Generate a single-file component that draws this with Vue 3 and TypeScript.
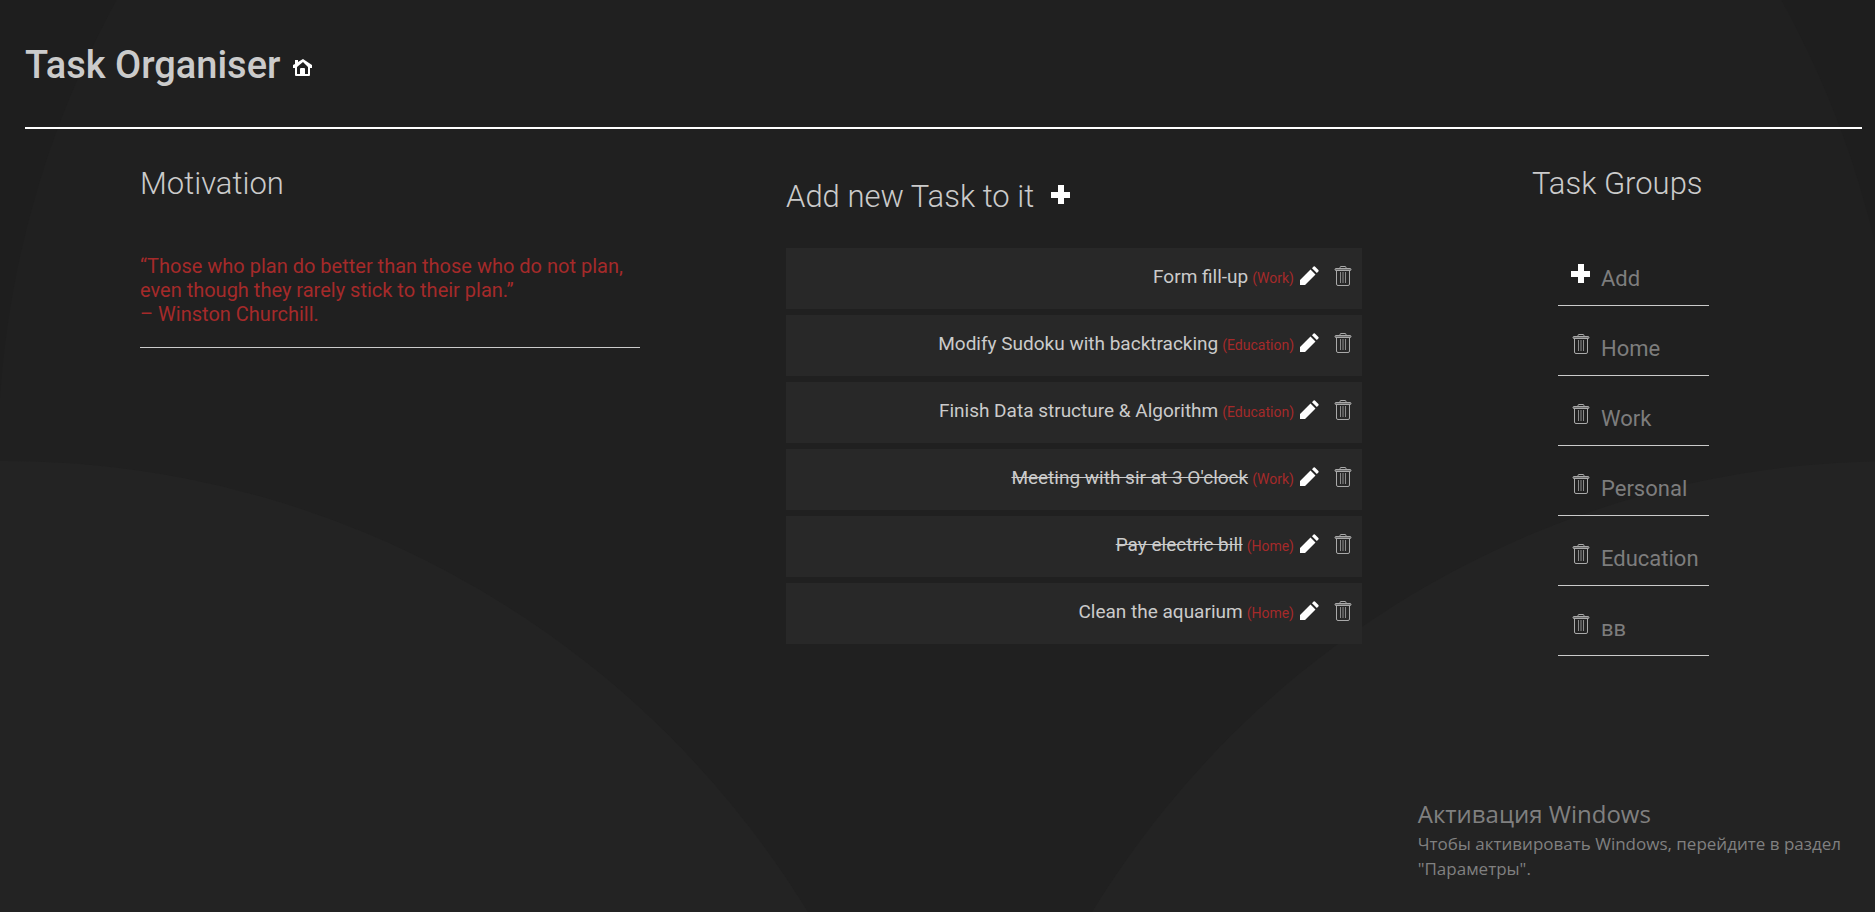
<script setup lang="ts">
interface Task {
  title: string
  group: string
  done: boolean
}

const tasks: Task[] = [
  { title: 'Form fill-up', group: 'Work', done: false },
  { title: 'Modify Sudoku with backtracking', group: 'Education', done: false },
  { title: 'Finish Data structure & Algorithm', group: 'Education', done: false },
  { title: "Meeting with sir at 3 O'clock", group: 'Work', done: true },
  { title: 'Pay electric bill', group: 'Home', done: true },
  { title: 'Clean the aquarium', group: 'Home', done: false },
]

const groups: string[] = ['Home', 'Work', 'Personal', 'Education', 'вв']
</script>

<template>
  <div class="page">
    <svg class="backdrop" viewBox="0 0 1875 912" preserveAspectRatio="xMidYMid slice" aria-hidden="true">
      <circle cx="949" cy="460" r="951" fill="#202020" />
      <circle cx="5" cy="1401" r="940" fill="#232323" />
      <circle cx="1895" cy="1401" r="940" fill="#232323" />
    </svg>
    <svg class="sprite" aria-hidden="true">
      <symbol id="trash" viewBox="0 0 20 20">
        <g fill="none" stroke="#a9a9a9">
          <path d="M7 2.5V1.5Q7 .5 8 .5h4Q13 .5 13 1.5V2.5" />
          <rect x="2" y="2.5" width="16" height="2" rx="1" fill="#6c6c6c" />
          <path d="M3.5 5V18Q3.500 19.500 5 19.500H15Q16.500 19.500 16.500 18V5" />
          <path d="M7.500 6V17M10 6V17M12.500 6V17" stroke="#8c8c8c" />
        </g>
      </symbol>
      <symbol id="pencil" viewBox="0 0 20 20">
        <path fill="#fff" d="M0 19V14L10.500 3.500 15.500 8.500 5 19ZM12 2.200 13.600.6Q14.200 0 14.900.6L18.400 4.100Q19 4.800 18.400 5.400L16.800 7Z" />
      </symbol>
      <symbol id="plus" viewBox="0 0 20 20">
        <path fill="#fff" d="M7 0h6v7h6v6h-6v6H7v-6H0V7h7z" />
      </symbol>
      <symbol id="house" viewBox="0 0 20 18">
        <path fill="#fff" fill-rule="evenodd" d="M2 1h3v2L10 0l9 6v3h-2v7q0 1-1 1H3q-1 0-1-1V9H0V6l2-1zM4 8v7h3v-5q0-1 1-1h3q1 0 1 1v5h3V8L10 3z" />
      </symbol>
    </svg>

    <header class="header">
      <h1>Task Organiser</h1>
      <a href="#" class="icon-link" aria-label="Home page"><svg class="house"><use href="#house" /></svg></a>
    </header>

    <main class="columns">
      <section class="motivation">
        <h2>Motivation</h2>
        <blockquote>
          “Those who plan do better than those who do not plan,<br />even though they rarely stick to their plan.”<br />– Winston Churchill.
        </blockquote>
      </section>

      <section class="tasks">
        <div class="add-task">
          <h2>Add new Task to it</h2>
          <button type="button" aria-label="Add task"><svg class="icon"><use href="#plus" /></svg></button>
        </div>
        <ul class="task-list">
          <li v-for="task in tasks" :key="task.title">
            <p class="label">
              <span :class="{ done: task.done }">{{ task.title }}</span>
              <small>({{ task.group }})</small>
            </p>
            <button type="button" :aria-label="`Edit ${task.title}`"><svg class="icon"><use href="#pencil" /></svg></button>
            <button type="button" class="remove" :aria-label="`Delete ${task.title}`"><svg class="icon"><use href="#trash" /></svg></button>
          </li>
        </ul>
      </section>

      <section class="groups">
        <h2>Task Groups</h2>
        <ul class="group-list">
          <li>
            <button type="button" aria-label="Add group"><svg class="icon"><use href="#plus" /></svg></button>
            <a href="#">Add</a>
          </li>
          <li v-for="group in groups" :key="group">
            <button type="button" :aria-label="`Delete ${group}`"><svg class="icon"><use href="#trash" /></svg></button>
            <a href="#">{{ group }}</a>
          </li>
        </ul>
      </section>
    </main>

    <aside class="activation">
      <strong>Активация Windows</strong>
      <p>Чтобы активировать Windows, перейдите в раздел<br />"Параметры".</p>
    </aside>
  </div>
</template>

<style>
body {
  background: #1e1e1e;
}
</style>

<style scoped>
.page {
  position: relative;
  box-sizing: border-box;
  min-height: 100vh;
  padding: 40px 13px 0 25px;
  overflow: hidden;
  background: #1e1e1e;
  color: #cbcbcb;
  font-family: Bahnschrift, Roboto, sans-serif;
}
.backdrop {
  position: absolute;
  inset: 0;
  width: 100%;
  height: 100%;
}
.sprite {
  position: absolute;
  width: 0;
  height: 0;
}
.header {
  position: relative;
  display: flex;
  gap: 13px;
  height: 87px;
  border-bottom: 2px solid #fff;
}
h1 {
  margin: 0;
  font-size: 38px;
  line-height: 50px;
  font-weight: 500;
}
h2 {
  margin: 0;
  font-size: 31px;
  line-height: 40px;
  font-weight: 300;
}
.icon-link {
  padding-top: 19px;
}
.house {
  display: block;
  width: 20px;
  height: 18px;
}
.icon {
  display: block;
  width: 20px;
  height: 20px;
}
button {
  padding: 0;
  border: 0;
  background: none;
  cursor: pointer;
}
.columns {
  position: relative;
  display: grid;
  grid-template-columns: minmax(0, 500fr) minmax(0, 576fr) minmax(0, 213fr);
  column-gap: 146px;
  padding: 35px 141px 0 115px;
}
blockquote {
  margin: 50px 0 0;
  padding-bottom: 21px;
  border-bottom: 1px solid #cbcbcb;
  color: #a52a2a;
  font-size: 20px;
  line-height: 24px;
}
ul {
  margin: 0;
  padding: 0;
  list-style: none;
}
.add-task {
  display: flex;
  align-items: center;
  gap: 17px;
  padding-top: 13px;
}
.add-task button {
  margin-bottom: 4px;
}
.task-list {
  display: grid;
  gap: 6px;
  margin-top: 31px;
}
.task-list li {
  display: flex;
  justify-content: flex-end;
  height: 61px;
  padding-right: 9px;
  background: #282828;
}
.task-list button {
  align-self: flex-start;
  margin: 18px 0 0 6px;
}
.task-list .remove {
  margin-left: 13px;
}
.label {
  margin: 0;
  font-size: 19px;
  line-height: 58px;
}
.label small {
  margin-left: 4px;
  color: #a52a2a;
  font-size: 14px;
}
.done {
  text-decoration: line-through;
}
.groups {
  padding-left: 24px;
}
.group-list {
  width: 151px;
  margin: 32px 0 0 26px;
}
.group-list li {
  display: flex;
  gap: 10px;
  box-sizing: border-box;
  height: 70px;
  padding: 28px 0 0 13px;
  border-bottom: 1px solid #cbcbcb;
}
.group-list button {
  align-self: flex-start;
}
.group-list a {
  color: #7d7d7d;
  font-size: 22px;
  line-height: 30px;
  text-decoration: none;
}
.activation {
  position: absolute;
  right: 34px;
  bottom: 31px;
  color: #808080;
  font-family: "Segoe UI", "Open Sans", "Noto Sans", sans-serif;
}
.activation strong {
  display: block;
  font-size: 24px;
  line-height: 34px;
  font-weight: 400;
}
.activation p {
  margin: 0;
  font-size: 17px;
  line-height: 25px;
}
</style>
